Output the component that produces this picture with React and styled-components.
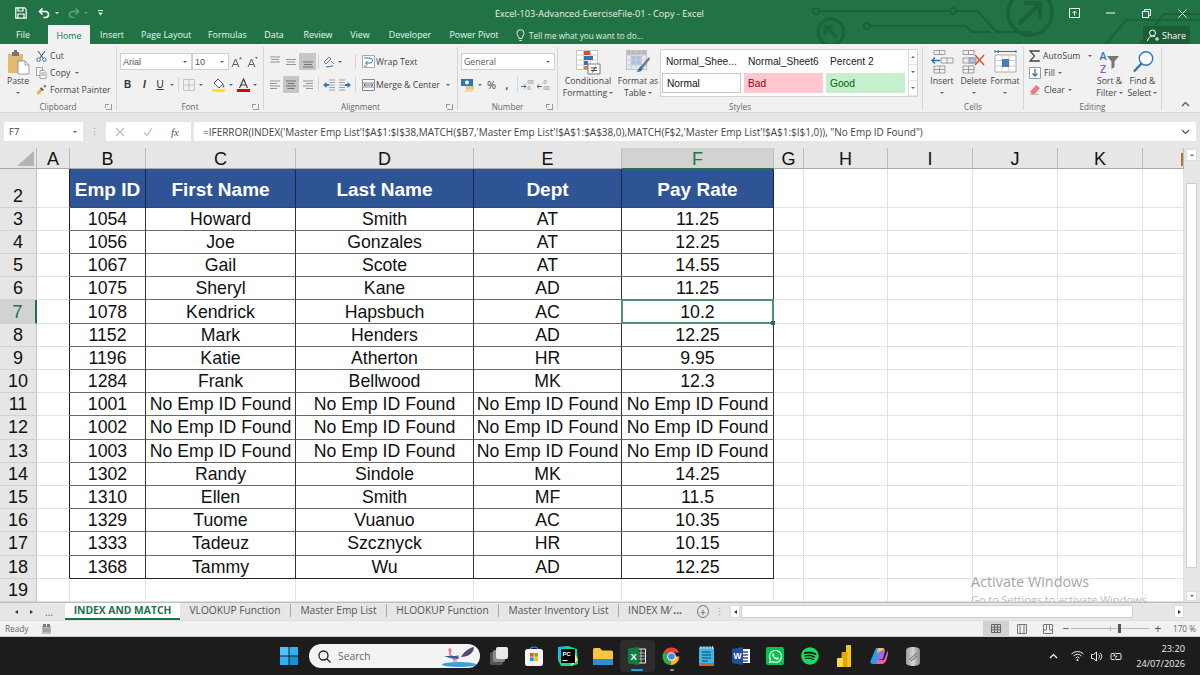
import React from "react";
import styled, { createGlobalStyle } from "styled-components";
import { FaWhatsapp, FaSpotify } from "react-icons/fa";

const UI = `"Open Sans", "Noto Sans", sans-serif`;
const CELL = `"Liberation Sans", Arial, sans-serif`;

const Global = createGlobalStyle`
  html, body { margin: 0; padding: 0; background: #fff; }
  * { box-sizing: border-box; }
`;

const Page = styled.div`
  width: 1200px; height: 675px; overflow: hidden; display: flex; flex-direction: column;
  font-family: ${UI}; font-size: 8.7px; color: #444; background: #f1f1f1;
`;
const Glyph = styled.svg`display: block; flex: none;`;
const FlipGlyph = styled(Glyph)`transform: scaleX(-1);`;
const Spacer = styled.div`width: ${p => p.$w}px; flex: none;`;

/* ---------- green header ---------- */
const GreenHeader = styled.header`
  position: relative; height: 44px; flex: none; background: #217346; color: #fff; overflow: hidden;
`;
const Circuit = styled.svg`position: absolute; right: 0; top: 0; pointer-events: none;`;
const TitleRow = styled.div`position: relative; height: 26px; display: flex; align-items: center;`;
const QuickBar = styled.div`display: flex; align-items: center; padding-left: 15px; gap: 4px; width: 420px;`;
const DocTitle = styled.div`
  position: absolute; left: 495px; top: 7px; width: 215px; font-size: 9.15px; line-height: 13px; color: #e9f2ed; white-space: nowrap;
`;
const WinControls = styled.div`margin-left: auto; display: flex; align-items: center;`;
const WinBtn = styled.div`width: 36px; display: flex; justify-content: center;`;
const TabRow = styled.nav`position: relative; height: 18px; display: flex; align-items: flex-end; font-size: 8.9px;`;
const Tab = styled.div`
  height: ${p => (p.$active ? "19px" : "18px")};
  margin-left: ${p => p.$left}px;
  padding-top: ${p => (p.$active ? "4px" : "2px")};
  width: ${p => p.$w}px; text-align: center; white-space: nowrap; line-height: 13px;
  background: ${p => (p.$active ? "#f1f1f1" : "transparent")};
  color: ${p => (p.$active ? "#217346" : "#eef5f1")};
`;
const TellMe = styled.div`display: flex; align-items: center; gap: 4px; margin-left: 17px; height: 18px; padding-top: 1px; color: #e2efe8; font-size: 8.2px; white-space: nowrap;`;
const ShareBtn = styled.div`
  margin-left: auto; margin-right: 10px; width: 47px; height: 18px; background: #1b5e39;
  display: flex; align-items: center; justify-content: center; gap: 2px; color: #fff;
`;

/* ---------- ribbon ---------- */
const Ribbon = styled.div`height: 69px; flex: none; display: flex; background: #f1f1f1; padding-top: 3px; border-bottom: 1px solid #d8d8d8;`;
const Group = styled.section`
  width: ${p => p.$w}px; flex: none; display: flex; flex-direction: column; margin-bottom: 2px;
  border-right: 1px solid #d6d6d6;
`;
const GroupBody = styled.div`
  height: 52px; flex: none; display: flex; padding-left: ${p => p.$pad || 0}px;
`;
const GroupStack = styled.div`display: flex; flex-direction: column; gap: 6px; padding-top: 6px;`;
const GroupLabel = styled.div`
  height: 12px; margin-top: 2px; flex: none; display: grid; grid-template-columns: 1fr auto 1fr; align-items: center;
  font-size: 8.2px; line-height: 12px; color: #666;
`;
const Launcher = styled.span`
  justify-self: end; margin-right: 4px; width: 6px; height: 6px; border: 1px solid #999; border-width: 0 1px 1px 0; position: relative;
  &::before { content: ""; position: absolute; left: -1px; top: 0; width: 3px; height: 3px; border: 1px solid #999; border-width: 1px 0 0 1px; }
`;
const ToolRow = styled.div`display: flex; align-items: center; height: 17px;`;
const IconBtn = styled.div`
  width: ${p => p.$w || 16}px; height: 17px; flex: none; display: flex; align-items: center; justify-content: center;
  background: ${p => (p.$on ? "#c6c6c6" : "transparent")};
`;
const FontBtn = styled(IconBtn)`
  font-family: ${CELL}; font-size: 10px; color: #333;
  font-weight: ${p => (p.$under ? 400 : 700)};
  font-style: ${p => (p.$italic ? "italic" : "normal")};
  text-decoration: ${p => (p.$under ? "underline" : "none")};
`;
const TextBtn = styled(IconBtn)`font-size: ${p => p.$size}px; font-weight: ${p => (p.$bold ? 700 : 400)};`;
const Sep = styled.div`width: 1px; height: 15px; background: #d4d4d4; flex: none; margin: 0 ${p => p.$r ?? 2}px 0 ${p => p.$l ?? 2}px;`;
const Caret = styled.span`
  display: inline-block; flex: none; width: 0; height: 0; border: 2.2px solid transparent; border-top: 2.6px solid ${p => p.$color || "#666"}; border-bottom: 0;
  margin: ${p => p.$m || "0"};
  transform: ${p => (p.$up ? "rotate(180deg)" : "none")};
`;
const Combo = styled.div`
  width: ${p => p.$w}px; height: 17px; flex: none; background: #fff; border: 1px solid #d0d0d0; margin-left: ${p => p.$ml || 0}px;
  display: flex; align-items: center; justify-content: space-between; padding: 0 4px 0 2px;
  font-size: ${p => p.$size || 8.7}px; font-family: ${p => (p.$cell ? CELL : UI)}; color: #555;
`;
const BigCol = styled.div`
  width: ${p => p.$w}px; flex: none; display: flex; flex-direction: column; align-items: center; padding-top: 3px;
  line-height: 12px; white-space: nowrap; text-align: center;
`;
const BigIcon = styled.div`height: 25px; flex: none; display: flex; align-items: flex-start; justify-content: center;`;
const Line = styled.div`height: 12px; display: flex; align-items: center; gap: 2px; justify-content: center;`;
const SmallStack = styled.div`display: flex; flex-direction: column; width: ${p => p.$w}px; flex: none;`;
const SmallRow = styled.div`height: 17px; display: flex; align-items: center; gap: ${p => p.$gap || 3}px; white-space: nowrap;`;
const Gallery = styled.div`
  width: 258px; height: 48px; flex: none; margin-top: 2px; background: #fff; border: 1px solid #d2d2d2;
  display: grid; grid-template-columns: 82px 82px 82px 1fr; grid-template-rows: 23px 1fr;
  font-family: ${CELL}; font-size: 10.2px; color: #222;
`;
const StyleName = styled.div`display: flex; align-items: center; padding-left: 5px; white-space: nowrap;`;
const StyleBox = styled.div`
  margin: 0 2px 3px 1px; padding-left: 4px; display: flex; align-items: center;
  background: ${p => p.$bg}; color: ${p => p.$fg};
  border: ${p => (p.$outline ? "1.5px solid #c6c6c6" : "none")};
`;
const GalleryScroll = styled.div`
  grid-column: 4; grid-row: 1 / span 2; display: grid; grid-template-rows: repeat(3, 1fr); border-left: 1px solid #ddd; margin-left: 1px;
`;
const ScrollCell = styled.div`display: flex; align-items: center; justify-content: center; border-bottom: 1px solid #e4e4e4;`;
const CollapseCell = styled.div`flex: 1; display: flex; align-items: flex-end; justify-content: flex-end; padding: 0 10px 5px 0;`;
const SortIcon = styled.div`display: flex; align-items: center; gap: 1px; height: 25px;`;
const SortLetters = styled.div`display: flex; flex-direction: column; font-size: 10.5px; line-height: 12.5px; font-weight: 600;`;
const SortA = styled.span`color: #2e75b6;`;
const SortZ = styled.span`color: #8e5bb5;`;

/* ---------- formula bar ---------- */
const FormulaBar = styled.div`
  height: 35px; flex: none; background: #e6e6e6; padding: 9px 4px 7px 4px; display: flex; align-items: stretch;
`;
const NameBox = styled.div`
  width: 79px; background: #fff; display: flex; align-items: center; justify-content: space-between; padding: 0 6px 0 5px; color: #444; font-size: 9.6px;
`;
const Dots = styled.div`width: 23px; display: flex; align-items: center; justify-content: center; color: #999; font-size: 9px;`;
const FxBox = styled.div`width: 85px; background: #fff; display: flex; align-items: center; margin-right: 3px; padding-left: 9px; gap: 18px;`;
const Fx = styled.span`font-family: "Liberation Serif", serif; font-style: italic; font-size: 11px; color: #555;`;
const FormulaText = styled.div`
  flex: 1; background: #fff; display: flex; align-items: center; justify-content: space-between; padding: 0 6px 0 9px; color: #444; white-space: nowrap; font-size: 9.98px;
`;

/* ---------- sheet ---------- */
const SheetArea = styled.main`height: 454px; flex: none; display: flex; background: #fff; position: relative; overflow: hidden;`;
const SheetGrid = styled.div`
  width: 1184px; flex: none; display: grid;
  grid-template-columns: 37px 33px 76px 150px 178px 148px 152px 30px 84px 85px 85px 85px 41px;
  grid-template-rows: 21px 38.7px repeat(17, 23.2px);
  font-family: ${CELL}; color: #111; border-right: 1px solid #bdbdbd;
`;
const Corner = styled.div`background: #e6e6e6; border-right: 1px solid #bbb; border-bottom: 1px solid #aaa; display: flex; align-items: flex-end; justify-content: flex-end; padding: 0 2px 2px 0;`;
const ColHead = styled.div`
  display: flex; align-items: center; justify-content: center; font-size: 18px; padding-top: 2px;
  background: ${p => (p.$sel ? "#d2d2d2" : "#e6e6e6")};
  color: ${p => (p.$sel ? "#217346" : "#111")};
  border-right: 1px solid #bcbcbc;
  border-bottom: 1px solid ${p => (p.$sel ? "#217346" : "#a8a8a8")};
`;
const TornMark = styled.span`width: 2px; height: 13px; background: #a87a3a; margin-left: auto;`;
const RowHead = styled.div`
  display: flex; align-items: ${p => (p.$tall ? "flex-end" : "center")}; justify-content: center; font-size: 18px;
  padding-top: 1px;
  background: ${p => (p.$sel ? "#d2d2d2" : "#e6e6e6")};
  color: ${p => (p.$sel ? "#217346" : "#111")};
  border-right: ${p => (p.$sel ? "2px solid #217346" : "1px solid #c4c4c4")};
  border-bottom: 1px solid #d2d2d2;
`;
const Blank = styled.div`
  border-right: 1px solid ${p => p.$edge || "#e2e2e2"};
  border-bottom: 1px solid #e2e2e2;
`;
const HeadCell = styled.div`
  display: flex; align-items: center; justify-content: center; padding-top: 4px;
  background: #2f5496; color: #fff; font-weight: 700; font-size: 19px; white-space: nowrap;
  border-right: 1px solid #16294d; border-bottom: 1px solid #444;
`;
const DataCell = styled.div`
  position: relative; display: flex; align-items: center; justify-content: center; font-size: 17.7px; white-space: nowrap; padding-top: 1px;
  border-right: 1px solid #333;
  border-bottom: 1px solid ${p => (p.$last ? "#222" : "#6a6a6a")};
`;
const Selection = styled.span`
  position: absolute; z-index: 2; inset: -1px -1px -1px -1px; border: 2px solid #4f9270; pointer-events: none;
  &::after { content: ""; position: absolute; right: -3px; bottom: -3px; width: 4px; height: 4px; background: #217346; }
`;
const VScroll = styled.aside`
  flex: 1; background: #e6e6e6; display: flex; flex-direction: column; padding: 1px 3px 1px 2px;
`;
const VBtn = styled.div`height: ${p => p.$h}px; flex: none; background: #fff; border: 1px solid #ddd; display: flex; align-items: center; justify-content: center; margin-top: ${p => (p.$auto ? "auto" : "0")};`;
const VThumb = styled.div`height: 385px; flex: none; background: #fff; border: 1px solid #cfcfcf; margin-top: 22px;`;
const Watermark = styled.div`
  position: absolute; left: 971px; top: 424px; color: #a6a6a6; font-family: ${UI}; white-space: nowrap; pointer-events: none;
`;
const WMBig = styled.div`font-size: 14.4px; line-height: 19px;`;
const WMSmall = styled.div`font-size: 10.9px; line-height: 17px; opacity: .75;`;

/* ---------- sheet tabs ---------- */
const SheetTabs = styled.div`
  height: 18px; flex: none; background: #e6e6e6; border-top: 1px solid #bdbdbd; display: flex; align-items: stretch; font-size: 10.2px; color: #555; white-space: nowrap;
`;
const TabNav = styled.div`width: 65px; flex: none; display: flex; align-items: center; padding-left: 15px; gap: 12px; color: #666;`;
const NavTri = styled.span`
  width: 0; height: 0; border: 2.6px solid transparent; flex: none;
  ${p => (p.$dir === "l" ? "border-right: 3px solid #333; border-left: 0;" : "border-left: 3px solid #333; border-right: 0;")}
`;
const ActiveSheet = styled.div`
  width: 115px; flex: none; background: #fff; border-bottom: 2px solid #217346; color: #217346; font-weight: 700; text-align: center; line-height: 14px; font-size: 10.3px;
`;
const SheetTab = styled.div`
  width: ${p => p.$w}px; flex: none; text-align: center;
  border-right: ${p => (p.$nobar ? "none" : "1px solid #aaa")}; margin: 1px 0 3px; height: 13px; line-height: 12px;
`;
const GreenDots = styled.span`color: #217346; font-weight: 700;`;
const PlusCircle = styled.div`
  width: 13px; height: 13px; border-radius: 50%; border: 1px solid #777; margin: 2px 0 0 6px; display: flex; align-items: center; justify-content: center; font-size: 11px; line-height: 10px; color: #555;
`;
const HScroll = styled.div`flex: 1; display: flex; align-items: center; gap: 1px; padding-right: 16px;`;
const HBtn = styled.div`width: 10px; height: 13px; background: #fff; border: 1px solid #ddd; display: flex; align-items: center; justify-content: center; flex: none;`;
const HThumb = styled.div`width: 392px; height: 13px; background: #fff; border: 1px solid #cfcfcf; flex: none;`;

/* ---------- status ---------- */
const StatusBar = styled.div`
  height: 17px; flex: none; background: #f1f1f1; border-top: 1px solid #e0e0e0; border-bottom: 1px solid #ccc; display: flex; align-items: center; font-size: 8.2px; color: #666; padding-left: 5px;
`;
const MacroSlot = styled.div`margin-left: 14px; display: flex;`;
const StatusRight = styled.div`margin-left: auto; display: flex; align-items: center; height: 100%;`;
const ViewBtn = styled.div`
  width: 26px; height: 100%; display: flex; align-items: center; justify-content: center; background: ${p => (p.$on ? "#d2d2d2" : "transparent")};
`;
const ZoomTrack = styled.div`width: 79px; height: 1px; background: #bbb; position: relative; margin: 0 3px 0 0;
  &::before { content: ""; position: absolute; left: 39px; top: -2px; width: 1px; height: 5px; background: #bbb; }
`;
const ZoomThumb = styled.span`position: absolute; left: 47px; top: -4px; width: 3px; height: 9px; background: #555;`;
const ZoomSign = styled.span`width: 10px; text-align: center; font-size: 12px; line-height: 12px; color: #555;`;
const ZoomPct = styled.span`width: 37px; padding-left: 10px; white-space: nowrap;`;

/* ---------- taskbar ---------- */
const Taskbar = styled.footer`
  flex: 1; background: #1c1c1c; display: flex; align-items: center; padding-left: 280px; color: #eee;
`;
const SearchBox = styled.div`
  width: 171px; height: 24px; margin: 0 2px 0 11px; border-radius: 12px; background: #f3f3f3; display: flex; align-items: center; padding: 0 3px 0 9px; gap: 7px; color: #666; font-size: 10.3px; flex: none;
`;
const SearchArt = styled.div`margin-left: auto;`;
const TaskIcon = styled.div`
  width: 34.5px; height: 32px; flex: none; display: flex; align-items: center; justify-content: center; position: relative; border-radius: 4px;
  background: ${p => (p.$active ? "#2d2d2d" : "transparent")};
`;
const RunDot = styled.span`
  position: absolute; bottom: 1px; left: 50%; margin-left: ${p => (p.$wide ? -6 : -2)}px; height: 2px; width: ${p => (p.$wide ? 12 : 4)}px; border-radius: 1px;
  background: ${p => (p.$wide ? "#2b9fe8" : "#9a9a9a")};
`;
const WhatsBox = styled.div`width: 18px; height: 18px; border-radius: 2px; background: #0bc24f; color: #fff; display: flex; align-items: center; justify-content: center; font-size: 15px;`;
const Spot = styled.div`width: 18px; height: 18px; color: #1ed760; font-size: 18px; display: flex; background: #111; border-radius: 50%;`;
const Tray = styled.div`margin-left: auto; display: flex; align-items: center; padding-right: 15px;`;
const TrayIcon = styled.div`width: 19px; display: flex; justify-content: center;`;
const Clock = styled.div`text-align: right; font-size: 9.2px; line-height: 15px; margin-left: 11px; color: #eee; white-space: nowrap;`;

/* ---------- icon drawings ---------- */
const SaveI = () => (
  <Glyph width="12" height="12" viewBox="0 0 12 12" fill="none" stroke="#fff" strokeWidth="1.2">
    <path d="M.8.8h8.8l1.6 1.6v8.8H.8z" /><path d="M3 1v3h5V1M3 11V7h6v4" />
  </Glyph>
);
const UndoI = () => (
  <Glyph width="13" height="12" viewBox="0 0 13 12" fill="none" stroke="#fff" strokeWidth="1.6">
    <path d="M1.5 4.5h6a3 3 0 0 1 0 6h-2" /><path d="M4.5 1.5l-3 3 3 3" />
  </Glyph>
);
const RedoI = () => (
  <Glyph width="13" height="12" viewBox="0 0 13 12" fill="none" stroke="#5f9f7e" strokeWidth="1.6">
    <path d="M11.5 4.5h-6a3 3 0 0 0 0 6h2" /><path d="M8.5 1.5l3 3-3 3" />
  </Glyph>
);
const CustomizeI = () => (
  <Glyph width="5" height="6" viewBox="0 0 5 6" fill="#dfeee6"><rect width="5" height="1" /><path d="M0 2.500h5L2.500 5.500z" /></Glyph>
);
const ScissorsI = () => (
  <Glyph width="11" height="12" viewBox="0 0 11 12" fill="none" stroke="#444">
    <path d="M2 1l5 7M9 1L4 8" /><circle cx="2.6" cy="9.6" r="1.8" stroke="#2e75b6" /><circle cx="8.4" cy="9.6" r="1.8" stroke="#2e75b6" />
  </Glyph>
);
const CopyI = () => (
  <Glyph width="11" height="12" viewBox="0 0 11 12" fill="#fff" stroke="#8a8a8a" strokeWidth=".8">
    <path d="M.5.5h6v8h-6z" /><path d="M4 3.5h4l2 2v6H4z" /><path d="M5 6h4M5 8h4" stroke="#4a84c4" />
  </Glyph>
);
const BrushI = () => (
  <Glyph width="11" height="11" viewBox="0 0 11 11">
    <path d="M5 3l3 3-2 1-2-2z" fill="#555" /><path d="M7 2l2 2 1.5-2L9 .5z" fill="#888" /><path d="M4 5l2 2-3 3.5-2.5-1 1-2z" fill="#e3b34e" />
  </Glyph>
);
const PasteI = () => (
  <Glyph width="23" height="25" viewBox="0 0 23 25">
    <path d="M1 4h15v19H1z" fill="#e3b970" /><path d="M5 2h7v4H5z" fill="#777" /><path d="M7 0h3v3H7z" fill="#777" />
    <path d="M11 11h7l4 4v9H11z" fill="#fff" stroke="#888" strokeWidth=".8" /><path d="M18 11v4h4" fill="none" stroke="#888" strokeWidth=".8" />
  </Glyph>
);
const GrowI = ({ up }) => (
  <Glyph width="12" height="12" viewBox="0 0 12 12">
    <path d="M1 11L4.5 3 8 11M2.5 8.5h4" fill="none" stroke="#555" strokeWidth="1" />
    <path d={up ? "M8 3l1.5-2L11 3z" : "M8 1l1.5 2L11 1z"} fill="#2e75b6" />
  </Glyph>
);
const BorderI = () => (
  <Glyph width="12" height="12" viewBox="0 0 12 12" fill="none" stroke="#c2c2c2"><path d="M.5.5h11v11H.5zM6 .5v11M.5 6h11" /></Glyph>
);
const FillI = () => (
  <Glyph width="14" height="14" viewBox="0 0 14 14">
    <path d="M6 1l5 5-4 4-5-5z" fill="#fff" stroke="#555" /><path d="M11 6c1 1.4 2 2.4 1 3.2s-1.800-.8-1-3.200z" fill="#2e75b6" />
    <rect x="0" y="11" width="13" height="3" fill="#ffec00" />
  </Glyph>
);
const ColorAI = () => (
  <Glyph width="13" height="14" viewBox="0 0 13 14">
    <path d="M2.500 10L6.500 1l4 9M4 7h5" fill="none" stroke="#444" strokeWidth="1.200" /><rect y="11" width="13" height="3" fill="#e3000f" />
  </Glyph>
);
const LinesI = ({ rows, on }) => (
  <Glyph width="12" height="12" viewBox="0 0 12 12" stroke={on ? "#666" : "#8a8a8a"} strokeWidth=".9">
    {rows.map((r, i) => <path key={i} d={`M${r[0]} ${r[2]}H${r[1]}`} />)}
  </Glyph>
);
const OrientI = () => (
  <Glyph width="13" height="12" viewBox="0 0 13 12" fill="none">
    <path d="M1 6l5-5 2 2-5 5zM8 5l3 3" stroke="#777" /><path d="M3 11l7-1" stroke="#2e75b6" strokeWidth="1.200" />
  </Glyph>
);
const IndentArt = () => (
  <>
    <path d="M6 1h6M6 3.500h6M6 6h6M6 8.500h6M6 11h6" stroke="#8a8a8a" strokeWidth=".8" /><path d="M0 6l3.500-3v2H6v2H3.500v2z" fill="#2e75b6" />
  </>
);
const IndentI = ({ flip }) => {
  const G = flip ? FlipGlyph : Glyph;
  return <G width="12" height="12" viewBox="0 0 12 12"><IndentArt /></G>;
};
const WrapI = () => (
  <Glyph width="13" height="13" viewBox="0 0 13 13" fill="none">
    <path d="M.5.5h12v12H.5z" stroke="#aaa" fill="#fff" /><path d="M2 3h6a2.500 2.500 0 0 1 0 5H4M5.500 6L3.500 8l2 2" stroke="#2e75b6" /><path d="M2 11h3" stroke="#888" />
  </Glyph>
);
const MergeI = () => (
  <Glyph width="13" height="12" viewBox="0 0 13 12" fill="#fff">
    <path d="M.5.5h12v11H.5zM.5 4h12M.5 8h12" stroke="#888" /><path d="M2 6h9M3.500 4.500L2 6l1.500 1.500M9.500 4.500L11 6 9.500 7.500" stroke="#2e75b6" fill="none" />
  </Glyph>
);
const MoneyI = () => (
  <Glyph width="14" height="14" viewBox="0 0 14 14">
    <rect x="0" y="1" width="12" height="7" fill="#2e75b6" /><circle cx="6" cy="4.500" r="2" fill="#fff" />
    <rect x="5" y="8" width="8" height="3" fill="#e8c27e" /><rect x="4" y="11" width="8" height="3" fill="#f0d7a6" />
  </Glyph>
);
const DecI = ({ more }) => (
  <Glyph width="14" height="14" viewBox="0 0 14 14">
    <text x="5" y="5.500" fontSize="5.500" fontFamily={UI} fill="#666">{more ? ".0" : ".00"}</text>
    <text x="5" y="12" fontSize="5.500" fontFamily={UI} fill="#666">{more ? ".00" : ".0"}</text>
    <path d="M0 8.500h5M2 6.500l-2 2 2 2" stroke="#2e75b6" strokeWidth="1" fill="none" transform={more ? undefined : "translate(5 0) scale(-1 1)"} />
  </Glyph>
);
const CondI = () => (
  <Glyph width="25" height="25" viewBox="0 0 25 25">
    <path d="M.5.500h21v19H.5z" fill="#fff" stroke="#c4c4c4" /><path d="M7.500 0v20M14.500 0v20M0 5h22M0 10h22M0 15h22" stroke="#d0d0d0" fill="none" />
    <rect x="8" y="1" width="6" height="4" fill="#d9512c" /><rect x="8" y="6" width="9" height="4" fill="#2e75b6" /><rect x="8" y="11" width="4" height="4" fill="#2e75b6" /><rect x="8" y="16" width="7" height="3.500" fill="#e8802a" />
    <path d="M12 14h12v10H12z" fill="#fff" stroke="#777" /><path d="M15 18h6M15 20.500h6M19.500 16.500l-3 6" stroke="#444" fill="none" />
  </Glyph>
);
const TableI = () => (
  <Glyph width="24" height="25" viewBox="0 0 24 25">
    <path d="M.5.500h20v19H.5z" fill="#e4ebf3" stroke="#c0c0c0" /><rect x="1" y="1" width="19" height="4" fill="#b9b9b9" /><rect x="5" y="6" width="11" height="9" fill="#a9c3de" />
    <path d="M5 0v20M10 0v20M15 0v20M0 5h20M0 10h20M0 15h20" stroke="#cfcfcf" fill="none" />
    <path d="M23 7l-8 9 2 2 7-9z" fill="#777" /><path d="M15 16l2 2c-1 3-3 4-6 4 1-2 2-5 4-6z" fill="#2e75b6" />
  </Glyph>
);
const InsertI = () => (
  <Glyph width="23" height="25" viewBox="0 0 23 25" fill="none" stroke="#8a8a8a" strokeWidth=".8">
    <path d="M3 .500h11v4H3zM8.500.500v4M3 16h11v7H3zM8.500 16v7M3 19.500h11M10 8h12v5H10zM16 8v5" /><path d="M9 10.500H1M4 7.500l-3 3 3 3" stroke="#2e75b6" strokeWidth="1.400" />
  </Glyph>
);
const DeleteI = () => (
  <Glyph width="24" height="25" viewBox="0 0 24 25" fill="none" stroke="#8a8a8a" strokeWidth=".8">
    <path d="M1 .500h11v4H1zM6.500.500v4M1 16h11v7H1zM6.500 16v7M1 19.500h11M1 8h11v5H1z" /><rect x="7" y="8" width="7" height="5" fill="#a9c3de" /><path d="M13 5l9 10M22 5l-9 10" stroke="#d9512c" strokeWidth="1.500" />
  </Glyph>
);
const FormatI = () => (
  <Glyph width="23" height="25" viewBox="0 0 23 25" fill="none">
    <path d="M1 1.500h21M1 0v3M22 0v3M3 1.500l2-1M3 1.500l2 1" stroke="#2e75b6" />
    <path d="M1 5h21v17H1z" stroke="#aaa" fill="#fff" /><path d="M8 5v17M15 5v17M1 10.500h21M1 16h21" stroke="#ccc" /><rect x="8" y="9" width="7" height="8" fill="#4a7ebb" />
  </Glyph>
);
const SigmaI = () => (
  <Glyph width="11" height="12" viewBox="0 0 11 12" fill="none" stroke="#444" strokeWidth="1.300"><path d="M10 2V1H1l4.500 5L1 11h9v-1" /></Glyph>
);
const FillDownI = () => (
  <Glyph width="12" height="12" viewBox="0 0 12 12" fill="#fff"><path d="M.5.500h11v11H.5z" stroke="#999" /><path d="M6 2v7M3.500 6.500L6 9l2.500-2.500" stroke="#2e75b6" strokeWidth="1.300" fill="none" /></Glyph>
);
const EraserI = () => (
  <Glyph width="12" height="11" viewBox="0 0 12 11"><path d="M7 1l4 3-5 6H3L1 8z" fill="#ef7d86" /><path d="M1 10.500h9" stroke="#bbb" /></Glyph>
);
const FunnelI = () => <Glyph width="12" height="13" viewBox="0 0 12 13"><path d="M0 0h12L7.500 5.500V11L4.500 13V5.500z" fill="#777" /></Glyph>;
const FindI = () => (
  <Glyph width="24" height="24" viewBox="0 0 24 24" fill="none"><circle cx="15" cy="8.500" r="6.700" stroke="#2e75b6" strokeWidth="1.400" fill="#fff" /><path d="M10.500 13.500L3 21.500" stroke="#2e75b6" strokeWidth="2.400" /></Glyph>
);
const ChevUp = () => <Glyph width="9" height="6" viewBox="0 0 9 6" fill="none" stroke="#555" strokeWidth="1.200"><path d="M1 5l3.500-3.500L8 5" /></Glyph>;
const ChevDown = () => <Glyph width="9" height="6" viewBox="0 0 9 6" fill="none" stroke="#555" strokeWidth="1.200"><path d="M1 1l3.500 3.500L8 1" /></Glyph>;
const Bulb = () => <Glyph width="9" height="13" viewBox="0 0 9 13" fill="none" stroke="#e2efe8"><path d="M3 9.500C3 7.500 1 6.500 1 4.200a3.500 3.500 0 0 1 7 0C8 6.500 6 7.500 6 9.500zM3.300 11.500h2.400" /></Glyph>;
const Person = () => <Glyph width="13" height="13" viewBox="0 0 13 13" fill="none" stroke="#fff"><circle cx="5.500" cy="4" r="3" /><path d="M.5 12c.5-3 2.500-5 5-5 1 0 2 .3 2.600.8M10 8v4M8 10h4" /></Glyph>;
const TickX = ({ kind }) => (
  <Glyph width="10" height="10" viewBox="0 0 10 10" fill="none" stroke="#bdbdbd" strokeWidth="1.200">
    <path d={kind === "x" ? "M1 1l8 8M9 1L1 9" : "M1 5.500l3 3L9 1"} />
  </Glyph>
);
const TriCorner = () => <Glyph width="17" height="15" viewBox="0 0 17 15"><path d="M17 0v15H0z" fill="#b4b4b4" /></Glyph>;
const WinDisplay = () => <Glyph width="11" height="10" viewBox="0 0 11 10" fill="none" stroke="#fff"><path d="M.5.500h10v9H.5z" /><path d="M5.500 7.500v-4M3.500 5l2-2 2 2" /></Glyph>;
const WinMin = () => <Glyph width="9" height="2" viewBox="0 0 9 2" stroke="#fff"><path d="M0 1h9" /></Glyph>;
const WinRestore = () => <Glyph width="9" height="9" viewBox="0 0 9 9" fill="none" stroke="#fff"><path d="M.5 2.500h6v6h-6zM2.500 2.500v-2h6v6h-2" /></Glyph>;
const WinClose = () => <Glyph width="9" height="9" viewBox="0 0 9 9" stroke="#fff"><path d="M.5.500l8 8M8.500.500l-8 8" /></Glyph>;

const MacroI = () => <Glyph width="9" height="10" viewBox="0 0 9 10"><rect y="2" width="9" height="8" fill="#bbb" /><rect x="1" y="0" width="3" height="3" fill="#777" /><rect x="5" y="0" width="3" height="3" fill="#777" /><path d="M1 5h7M1 7h7" stroke="#888" /></Glyph>;
const NormalV = () => <Glyph width="10" height="9" viewBox="0 0 10 9" fill="none" stroke="#666"><path d="M.5.500h9v8h-9zM3.500.500v8M6.500.500v8M.5 3.200h9M.5 5.800h9" /></Glyph>;
const LayoutV = () => <Glyph width="10" height="10" viewBox="0 0 10 10" fill="none" stroke="#777"><path d="M.5.500h9v9h-9zM3 .500v9M7 .500v9" /></Glyph>;
const BreakV = () => <Glyph width="10" height="10" viewBox="0 0 10 10" fill="none" stroke="#777"><path d="M.5.500h9v9h-9zM.5 6h3V.500M9.500 6h-3V.500" /></Glyph>;

const WinLogo = () => (
  <Glyph width="18" height="18" viewBox="0 0 18 18">
    <rect width="8.500" height="8.500" fill="#4cc2ff" /><rect x="9.500" width="8.500" height="8.500" fill="#2fb0f5" />
    <rect y="9.500" width="8.500" height="8.500" fill="#2fb0f5" /><rect x="9.500" y="9.500" width="8.500" height="8.500" fill="#1691d8" />
  </Glyph>
);
const SearchI = () => <Glyph width="13" height="13" viewBox="0 0 13 13" fill="none" stroke="#222" strokeWidth="1.300"><circle cx="5.500" cy="5.500" r="4.500" /><path d="M9 9l3.500 3.500" /></Glyph>;
const Flamingo = () => (
  <Glyph width="36" height="22" viewBox="0 0 36 22">
    <ellipse cx="18" cy="19.500" rx="17" ry="2.500" fill="#3aa0dc" />
    <path d="M8 3c3 0 3 3 2 5-1 1 1 3 4 3l3-1c2 1 2 3-1 4l-3 1-4-3C7 10 9 6 7 5z" fill="#ea7f93" />
    <path d="M33 2c0 6-6 10-13 10 2-4 7-9 13-10z" fill="#4d4d72" /><path d="M3 11l13 0 2 3-9-1z" fill="#2b5f9e" />
    <path d="M13 14v5M15 14v5" stroke="#e06f85" />
  </Glyph>
);
const TaskView = () => (
  <Glyph width="20" height="20" viewBox="0 0 20 20">
    <rect x="1" y="6" width="13" height="13" rx="2" fill="#555" /><rect x="4" y="4" width="12" height="12" rx="2" fill="#8a8a8a" /><rect x="7" y="1" width="12" height="12" rx="2" fill="#e8e8e8" />
  </Glyph>
);
const StoreI = () => (
  <Glyph width="18" height="20" viewBox="0 0 18 20">
    <path d="M5 4c0-4 8-4 8 0" fill="none" stroke="#3aa0dc" strokeWidth="1.200" /><rect y="3" width="18" height="17" rx="2.500" fill="#f4f4f4" />
    <rect x="5" y="7" width="3.700" height="3.700" fill="#f25022" /><rect x="9.300" y="7" width="3.700" height="3.700" fill="#7fba00" /><rect x="5" y="11.300" width="3.700" height="3.700" fill="#00a4ef" /><rect x="9.300" y="11.300" width="3.700" height="3.700" fill="#ffb900" />
  </Glyph>
);
const PyCharm = () => (
  <Glyph width="20" height="20" viewBox="0 0 20 20">
    <path d="M1 2l9-2 9 3 1 15-6 2H3L0 14z" fill="#21d789" /><path d="M0 1l9-1-2 10-7 3z" fill="#07c3f2" /><path d="M13 20l7-6-3-6z" fill="#fcf84a" />
    <rect x="3" y="3" width="14" height="14" fill="#000" />
    <text x="4.500" y="10" fontSize="6" fontWeight="700" fontFamily={CELL} fill="#fff">PC</text><rect x="4.500" y="14" width="5" height="1" fill="#fff" />
  </Glyph>
);
const FolderI = () => (
  <Glyph width="20" height="17" viewBox="0 0 20 17">
    <path d="M0 1.500A1.500 1.500 0 0 1 1.500 0H7l2 2.500h9.500A1.500 1.500 0 0 1 20 4v11.500a1.500 1.500 0 0 1-1.500 1.500h-17A1.500 1.500 0 0 1 0 15.500z" fill="#f7c744" />
    <path d="M0 11h20v4.500a1.500 1.500 0 0 1-1.500 1.500h-17A1.500 1.500 0 0 1 0 15.500z" fill="#2a8fd8" />
  </Glyph>
);
const ExcelI = () => (
  <Glyph width="18" height="18" viewBox="0 0 18 18">
    <path d="M9 2h8.500v14H9z" fill="none" stroke="#e6f2ea" /><path d="M9 6h8M9 9h8M9 12h8M13 2v14" stroke="#e6f2ea" strokeWidth=".7" />
    <path d="M0 1.500L11 0v18L0 16.500z" fill="#107c41" />
    <text x="2.400" y="12.500" fontFamily={CELL} fontWeight="700" fontSize="9.500" fill="#fff">X</text>
  </Glyph>
);
const ChromeI = () => (
  <Glyph width="19" height="19" viewBox="0 0 24 24">
    <path d="M12 12L2.500 6A11 11 0 0 1 21.800 7H12z" fill="#ea4335" />
    <path d="M12 12h9.800A11 11 0 0 1 11 23z" fill="#fbbc05" />
    <path d="M12 12l-1 11A11 11 0 0 1 2.500 6z" fill="#34a853" />
    <circle cx="12" cy="12" r="5.500" fill="#fff" /><circle cx="12" cy="12" r="4.200" fill="#4285f4" />
  </Glyph>
);
const NotepadI = () => (
  <Glyph width="15" height="20" viewBox="0 0 15 20">
    <rect y="1" width="15" height="17" rx="1" fill="#3fb6e8" /><rect y="17" width="15" height="3" fill="#b5703a" />
    <path d="M2 0v3M5 0v3M8 0v3M11 0v3M13.500 0v3" stroke="#bfe7f7" /><path d="M3 6h9M3 9h9M3 12h9M3 15h6" stroke="#10405a" />
  </Glyph>
);
const WordI = () => (
  <Glyph width="18" height="18" viewBox="0 0 18 18">
    <path d="M8 2h10v14H8z" fill="#fff" /><path d="M10 5h6M10 8h6M10 11h6M10 14h6" stroke="#2b5797" strokeWidth="1.300" />
    <path d="M0 2l11-2v18L0 16z" fill="#1f4e9a" />
    <text x="1.500" y="12" fontFamily={CELL} fontWeight="700" fontSize="8.500" fill="#fff">W</text>
  </Glyph>
);
const BiI = () => (
  <Glyph width="14" height="22" viewBox="0 0 14 22">
    <rect x="9" width="5" height="22" rx="1" fill="#f2c811" /><rect x="4.500" y="7" width="6" height="15" rx="1" fill="#e0a800" /><rect y="13" width="6" height="9" rx="1" fill="#f7d84e" />
  </Glyph>
);
const CopilotI = () => (
  <Glyph width="18" height="18" viewBox="0 0 18 18">
    <path d="M6 1h4l-3 16H3c-2 0-3-1-2.500-3z" fill="#2f9be8" /><path d="M8 1h4c2 0 3 1 3 3l-2 8-5 1z" fill="#9b6bea" />
    <path d="M8 1h4c1 0 2 .5 2.300 1.500L7 6z" fill="#f5c242" /><path d="M7 13h7l3.500-9c1 1 .5 3 0 5-1 4-2 8-5.500 8H6z" fill="#e85ea8" />
  </Glyph>
);
const DbI = () => (
  <Glyph width="14" height="19" viewBox="0 0 14 19">
    <defs><linearGradient id="dbg" x1="0" x2="1"><stop offset="0" stopColor="#9a9aa0" /><stop offset=".5" stopColor="#d4d4d8" /><stop offset="1" stopColor="#85858c" /></linearGradient></defs>
    <path d="M0 3c0-4 14-4 14 0v13c0 4-14 4-14 0z" fill="url(#dbg)" /><path d="M3 13l8-7M5 14l6-5" stroke="#666" fill="none" />
  </Glyph>
);
const CaretUpTray = () => <Glyph width="9" height="6" viewBox="0 0 9 6" fill="none" stroke="#fff" strokeWidth="1.200"><path d="M1 5l3.500-3.500L8 5" /></Glyph>;
const Wifi = () => <Glyph width="13" height="10" viewBox="0 0 13 10" fill="none" stroke="#eee"><path d="M.5 3a8.500 8.500 0 0 1 12 0M2.500 5a5.500 5.500 0 0 1 8 0M4.500 7a2.700 2.700 0 0 1 4 0" /><circle cx="6.500" cy="9" r=".7" fill="#eee" /></Glyph>;
const Volume = () => <Glyph width="12" height="11" viewBox="0 0 12 11" fill="none" stroke="#eee"><path d="M.5 3.500h2L5.500 1v9l-3-2.500h-2zM7.500 3.500a2.500 2.500 0 0 1 0 4M9 2a4.500 4.500 0 0 1 0 7" /></Glyph>;
const Battery = () => <Glyph width="13" height="11" viewBox="0 0 13 11" fill="none" stroke="#eee"><path d="M3 2.500h8a1 1 0 0 1 1 1v4a1 1 0 0 1-1 1H3a1 1 0 0 1-1-1v-4a1 1 0 0 1 1-1z" /><path d="M7 0L3.500 5.500h3L5 10.500l4-6H6z" fill="#eee" stroke="#1c1c1c" strokeWidth=".5" /></Glyph>;

/* ---------- circuit art ---------- */
const CircuitArt = () => (
  <Circuit width="400" height="44" viewBox="0 0 400 44" fill="none" stroke="#1c6239" strokeWidth="2.200">
    <circle cx="16" cy="11" r="3" /><path d="M19 11h131" /><circle cx="153" cy="11" r="3" /><path d="M156 11h21l20 21h35" />
    <circle cx="67" cy="26" r="3" /><path d="M70 26h96l6 6h18" />
    <circle cx="31" cy="32" r="13" strokeWidth="3" /><path d="M37 38l-11-11M25 35v-8h8" strokeWidth="3" />
    <circle cx="230" cy="13" r="22" strokeWidth="3.500" /><path d="M219 24l21-21M224 3h16v16" strokeWidth="4" />
    <path d="M306 44l20-24h74M340 44l24-30h36" />
  </Circuit>
);

/* ---------- data ---------- */
const NF = "No Emp ID Found";
const ROWS = [
  ["1054", "Howard", "Smith", "AT", "11.25"], ["1056", "Joe", "Gonzales", "AT", "12.25"],
  ["1067", "Gail", "Scote", "AT", "14.55"], ["1075", "Sheryl", "Kane", "AD", "11.25"],
  ["1078", "Kendrick", "Hapsbuch", "AC", "10.2"], ["1152", "Mark", "Henders", "AD", "12.25"],
  ["1196", "Katie", "Atherton", "HR", "9.95"], ["1284", "Frank", "Bellwood", "MK", "12.3"],
  ["1001", NF, NF, NF, NF], ["1002", NF, NF, NF, NF], ["1003", NF, NF, NF, NF],
  ["1302", "Randy", "Sindole", "MK", "14.25"], ["1310", "Ellen", "Smith", "MF", "11.5"],
  ["1329", "Tuome", "Vuanuo", "AC", "10.35"], ["1333", "Tadeuz", "Szcznyck", "HR", "10.15"],
  ["1368", "Tammy", "Wu", "AD", "12.25"],
];
const COLS = ["A", "B", "C", "D", "E", "F", "G", "H", "I", "J", "K"];
const HEAD = ["Emp ID", "First Name", "Last Name", "Dept", "Pay Rate"];
const TRAIL = [0, 1, 2, 3, 4, 5];
const FORMULA = `=IFERROR(INDEX('Master Emp List'!$A$1:$I$38,MATCH($B7,'Master Emp List'!$A$1:$A$38,0),MATCH(F$2,'Master Emp List'!$A$1:$I$1,0)), "No Emp ID Found")`;

const Sheet = () => (
  <SheetGrid>
    <Corner><TriCorner /></Corner>
    {COLS.map(c => <ColHead key={c} $sel={c === "F"}>{c}</ColHead>)}
    <ColHead><TornMark /></ColHead>
    <RowHead $tall>2</RowHead>
    <Blank $edge="#222" />
    {HEAD.map(h => <HeadCell key={h}>{h}</HeadCell>)}
    {TRAIL.map(i => <Blank key={i} />)}
    {ROWS.map((r, ri) => {
      const num = ri + 3;
      return (
        <React.Fragment key={num}>
          <RowHead $sel={num === 7}>{num}</RowHead>
          <Blank $edge="#222" />
          {r.map((v, ci) => (
            <DataCell key={ci} $last={num === 18}>
              {v}
              {num === 7 && ci === 4 && <Selection />}
            </DataCell>
          ))}
          {TRAIL.map(i => <Blank key={i} />)}
        </React.Fragment>
      );
    })}
    <RowHead>19</RowHead>
    {[...TRAIL, 6, 7, 8, 9, 10, 11].map(i => <Blank key={i} />)}
  </SheetGrid>
);

const Ribbons = () => (
  <Ribbon>
    <Group $w={117}>
      <GroupBody>
        <BigCol $w={36}>
          <BigIcon><PasteI /></BigIcon>
          <Line>Paste</Line>
          <Line><Caret /></Line>
        </BigCol>
        <SmallStack $w={80}>
          <SmallRow><ScissorsI />Cut</SmallRow>
          <SmallRow><CopyI />Copy<Caret $m="0 0 0 2px" /></SmallRow>
          <SmallRow><BrushI />Format Painter</SmallRow>
        </SmallStack>
      </GroupBody>
      <GroupLabel><span /><span>Clipboard</span><Launcher /></GroupLabel>
    </Group>

    <Group $w={147}>
      <GroupBody><GroupStack>
        <ToolRow>
          <Combo $w={72} $ml={3} $cell $size={9}>Arial<Caret /></Combo>
          <Combo $w={37} $cell $size={9}>10<Caret /></Combo>
          <IconBtn><GrowI up /></IconBtn><IconBtn><GrowI /></IconBtn>
        </ToolRow>
        <ToolRow>
          <Spacer $w={2} /><FontBtn $w={17}>B</FontBtn>
          <FontBtn $w={17} $italic>I</FontBtn>
          <FontBtn $w={14} $under>U</FontBtn>
          <IconBtn $w={9}><Caret /></IconBtn>
          <Sep />
          <IconBtn><BorderI /></IconBtn><IconBtn $w={8}><Caret /></IconBtn>
          <Spacer $w={6} /><IconBtn><FillI /></IconBtn><IconBtn $w={8}><Caret /></IconBtn>
          <IconBtn><ColorAI /></IconBtn><IconBtn $w={8}><Caret /></IconBtn>
        </ToolRow>
      </GroupStack></GroupBody>
      <GroupLabel><span /><span>Font</span><Launcher /></GroupLabel>
    </Group>

    <Group $w={194}>
      <GroupBody $pad={3}><GroupStack>
        <ToolRow>
          <IconBtn><LinesI rows={[[1, 11, 1], [2, 10, 3.5], [1, 11, 6]]} /></IconBtn>
          <IconBtn><LinesI rows={[[1, 11, 3.5], [2, 10, 6], [1, 11, 8.5]]} /></IconBtn>
          <IconBtn $w={17} $on><LinesI on rows={[[1, 11, 6], [2, 10, 8.5], [1, 11, 11]]} /></IconBtn>
          <Sep />
          <IconBtn><OrientI /></IconBtn><IconBtn $w={6}><Caret /></IconBtn>
          <Sep $l={12} $r={6} />
          <SmallRow $gap={1}><WrapI />Wrap Text</SmallRow>
        </ToolRow>
        <ToolRow>
          <IconBtn><LinesI rows={[[1, 11, 2], [1, 8, 4.5], [1, 11, 7], [1, 8, 9.5]]} /></IconBtn>
          <IconBtn $on><LinesI on rows={[[1, 11, 2], [2.5, 9.5, 4.5], [1, 11, 7], [2.5, 9.5, 9.5]]} /></IconBtn>
          <IconBtn $w={17}><LinesI rows={[[1, 11, 2], [4, 11, 4.5], [1, 11, 7], [4, 11, 9.5]]} /></IconBtn>
          <Sep />
          <IconBtn><IndentI /></IconBtn><IconBtn><IndentI flip /></IconBtn>
          <Sep $l={2} $r={6} />
          <SmallRow $gap={1}><MergeI />Merge &amp; Center<Caret $m="0 0 0 5px" /></SmallRow>
        </ToolRow>
      </GroupStack></GroupBody>
      <GroupLabel><span /><span>Alignment</span><Launcher /></GroupLabel>
    </Group>

    <Group $w={100}>
      <GroupBody $pad={3}><GroupStack>
        <Combo $w={94}>General<Caret /></Combo>
        <ToolRow>
          <IconBtn $w={14}><MoneyI /></IconBtn><IconBtn $w={9}><Caret /></IconBtn>
          <TextBtn $w={15} $size={11}>%</TextBtn>
          <TextBtn $w={16} $size={10} $bold>,</TextBtn>
          <Sep />
          <IconBtn><DecI more={false} /></IconBtn><IconBtn><DecI more /></IconBtn>
        </ToolRow>
      </GroupStack></GroupBody>
      <GroupLabel><span /><span>Number</span><Launcher /></GroupLabel>
    </Group>

    <Group $w={365}>
      <GroupBody $pad={2}>
        <BigCol $w={56}>
          <BigIcon><CondI /></BigIcon>
          <Line>Conditional</Line>
          <Line>Formatting<Caret /></Line>
        </BigCol>
        <BigCol $w={44}>
          <BigIcon><TableI /></BigIcon>
          <Line>Format as</Line>
          <Line>Table<Caret /></Line>
        </BigCol>
        <Gallery>
          <StyleName>Normal_Shee...</StyleName>
          <StyleName>Normal_Sheet6</StyleName>
          <StyleName>Percent 2</StyleName>
          <GalleryScroll>
            <ScrollCell><Caret $up /></ScrollCell>
            <ScrollCell><Caret /></ScrollCell>
            <ScrollCell><Caret /></ScrollCell>
          </GalleryScroll>
          <StyleBox $bg="#fff" $fg="#111" $outline>Normal</StyleBox>
          <StyleBox $bg="#ffc7ce" $fg="#9c0006">Bad</StyleBox>
          <StyleBox $bg="#c6efce" $fg="#006100">Good</StyleBox>
        </Gallery>
      </GroupBody>
      <GroupLabel><span /><span>Styles</span><span /></GroupLabel>
    </Group>

    <Group $w={101}>
      <GroupBody $pad={3}>
        <BigCol $w={32}><BigIcon><InsertI /></BigIcon><Line>Insert</Line><Line><Caret /></Line></BigCol>
        <BigCol $w={31}><BigIcon><DeleteI /></BigIcon><Line>Delete</Line><Line><Caret /></Line></BigCol>
        <BigCol $w={32}><BigIcon><FormatI /></BigIcon><Line>Format</Line><Line><Caret /></Line></BigCol>
      </GroupBody>
      <GroupLabel><span /><span>Cells</span><span /></GroupLabel>
    </Group>

    <Group $w={138}>
      <GroupBody $pad={5}>
        <SmallStack $w={64}>
          <SmallRow><SigmaI />AutoSum<Caret $m="0 0 0 5px" /></SmallRow>
          <SmallRow><FillDownI />Fill<Caret /></SmallRow>
          <SmallRow><EraserI />Clear<Caret /></SmallRow>
        </SmallStack>
        <BigCol $w={33}>
          <BigIcon>
            <SortIcon>
              <SortLetters><SortA>A</SortA><SortZ>Z</SortZ></SortLetters>
              <FunnelI />
            </SortIcon>
          </BigIcon>
          <Line>Sort &amp;</Line><Line>Filter<Caret /></Line>
        </BigCol>
        <BigCol $w={33}><BigIcon><FindI /></BigIcon><Line>Find &amp;</Line><Line>Select<Caret /></Line></BigCol>
      </GroupBody>
      <GroupLabel><span /><span>Editing</span><span /></GroupLabel>
    </Group>

    <CollapseCell><ChevUp /></CollapseCell>
  </Ribbon>
);

export default function App() {
  return (
    <>
      <Global />
      <Page>
        <GreenHeader>
          <CircuitArt />
          <TitleRow>
            <QuickBar>
              <SaveI />
              <Spacer $w={3} />
              <UndoI />
              <Caret $color="#fff" />
              <Spacer $w={0} />
              <RedoI />
              <Caret $color="#5f9f7e" />
              <Spacer $w={2} />
              <CustomizeI />
            </QuickBar>
            <DocTitle>Excel-103-Advanced-ExerciseFile-01 - Copy - Excel</DocTitle>
            <WinControls>
              <WinBtn><WinDisplay /></WinBtn>
              <WinBtn><WinMin /></WinBtn>
              <WinBtn><WinRestore /></WinBtn>
              <WinBtn><WinClose /></WinBtn>
            </WinControls>
          </TitleRow>
          <TabRow>
            <Tab $left={12} $w={22}>File</Tab>
            <Tab $left={14} $w={42} $active>Home</Tab>
            <Tab $left={10} $w={22}>Insert</Tab>
            <Tab $left={19} $w={50}>Page Layout</Tab>
            <Tab $left={17} $w={38}>Formulas</Tab>
            <Tab $left={18} $w={20}>Data</Tab>
            <Tab $left={19} $w={30}>Review</Tab>
            <Tab $left={17} $w={20}>View</Tab>
            <Tab $left={18} $w={44}>Developer</Tab>
            <Tab $left={17} $w={50}>Power Pivot</Tab>
            <TellMe><Bulb />Tell me what you want to do...</TellMe>
            <ShareBtn><Person />Share</ShareBtn>
          </TabRow>
        </GreenHeader>
        <Ribbons />
        <FormulaBar>
          <NameBox>F7<Caret /></NameBox>
          <Dots>⋮</Dots>
          <FxBox><TickX kind="x" /><TickX kind="v" /><Fx>fx</Fx></FxBox>
          <FormulaText>{FORMULA}<ChevDown /></FormulaText>
        </FormulaBar>
        <SheetArea>
          <Sheet />
          <VScroll>
            <VBtn $h={12}><Caret $up /></VBtn>
            <VThumb />
            <VBtn $h={10} $auto><Caret /></VBtn>
          </VScroll>
          <Watermark>
            <WMBig>Activate Windows</WMBig>
            <WMSmall>Go to Settings to activate Windows.</WMSmall>
          </Watermark>
        </SheetArea>
        <SheetTabs>
          <TabNav><NavTri $dir="l" /><NavTri $dir="r" /><span>...</span></TabNav>
          <ActiveSheet>INDEX AND MATCH</ActiveSheet>
          <SheetTab $w={111}>VLOOKUP Function</SheetTab>
          <SheetTab $w={96}>Master Emp List</SheetTab>
          <SheetTab $w={112}>HLOOKUP Function</SheetTab>
          <SheetTab $w={120}>Master Inventory List</SheetTab>
          <SheetTab $w={72} $nobar>INDEX M⁄ <GreenDots>...</GreenDots></SheetTab>
          <PlusCircle>+</PlusCircle>
          <Dots>⋮</Dots>
          <HScroll>
            <HBtn><NavTri $dir="l" /></HBtn>
            <HThumb />
            <Spacer $w={39} />
            <HBtn><NavTri $dir="r" /></HBtn>
          </HScroll>
        </SheetTabs>
        <StatusBar>
          Ready
          <MacroSlot><MacroI /></MacroSlot>
          <StatusRight>
            <ViewBtn $on><NormalV /></ViewBtn>
            <ViewBtn><LayoutV /></ViewBtn>
            <ViewBtn><BreakV /></ViewBtn>
            <ZoomSign>−</ZoomSign>
            <ZoomTrack><ZoomThumb /></ZoomTrack>
            <ZoomSign>+</ZoomSign>
            <ZoomPct>170 %</ZoomPct>
          </StatusRight>
        </StatusBar>
        <Taskbar>
          <WinLogo />
          <SearchBox>
            <SearchI />Search
            <SearchArt><Flamingo /></SearchArt>
          </SearchBox>
          <TaskIcon><TaskView /></TaskIcon>
          <TaskIcon><StoreI /></TaskIcon>
          <TaskIcon><PyCharm /></TaskIcon>
          <TaskIcon><FolderI /></TaskIcon>
          <TaskIcon $active><ExcelI /><RunDot $wide /></TaskIcon>
          <TaskIcon><ChromeI /><RunDot /></TaskIcon>
          <TaskIcon><NotepadI /></TaskIcon>
          <TaskIcon><WordI /></TaskIcon>
          <TaskIcon><WhatsBox><FaWhatsapp /></WhatsBox></TaskIcon>
          <TaskIcon><Spot><FaSpotify /></Spot></TaskIcon>
          <TaskIcon><BiI /></TaskIcon>
          <TaskIcon><CopilotI /></TaskIcon>
          <TaskIcon><DbI /></TaskIcon>
          <Tray>
            <TrayIcon><CaretUpTray /></TrayIcon>
            <Spacer $w={5} />
            <TrayIcon><Wifi /></TrayIcon>
            <TrayIcon><Volume /></TrayIcon>
            <TrayIcon><Battery /></TrayIcon>
            <Clock>23:20<br />24/07/2026</Clock>
          </Tray>
        </Taskbar>
      </Page>
    </>
  );
}
